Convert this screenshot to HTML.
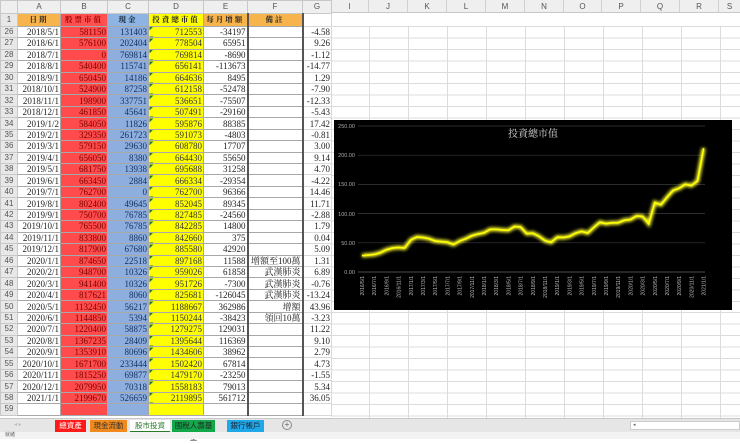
<!DOCTYPE html>
<html><head><meta charset="utf-8"><style>
*{margin:0;padding:0;box-sizing:border-box}
body{width:740px;height:439px;overflow:hidden;background:#fff;position:relative;font-family:"Liberation Serif","Noto Serif CJK SC",serif}
table{position:absolute;left:0;top:0;border-collapse:collapse;table-layout:fixed;width:331px}
td,th{font-size:9px;line-height:10px;padding:0 1px;white-space:nowrap;overflow:hidden;border:1px solid #a8a8a8;text-align:right;color:#222;font-weight:normal}
th{background:#e8e8e8;color:#555;text-align:center;font-family:"Liberation Sans",sans-serif;border-color:#c8c8c8;font-size:8px}
tr.ch th{height:13px;background:#efefef}
tr.h1 td{height:12.8px;text-align:center;font-weight:bold;font-size:7.5px;letter-spacing:2px;font-family:"Liberation Serif","Noto Serif CJK TC",serif}
tr{height:11.45px}
td:nth-child(3){background:#ff4b4b;color:#7a0000}
td:nth-child(4){background:#8eaee0;color:#10305a}
td:nth-child(5){background:linear-gradient(135deg,#1f7a2a 2.5px,transparent 3px),#ffff00;color:#333}
td:nth-child(6){border-right:2px solid #555}
td:nth-child(7){border-right:2px solid #555;font-family:"Liberation Serif","Noto Serif CJK TC",serif}
td:nth-child(8){border-left:none;border-color:#d8d8d8 #d8d8d8 #d8d8d8 #555}
tr.h1 td:nth-child(2),tr.h1 td:nth-child(6),tr.h1 td:nth-child(7){background:#f8b44c;color:#222}
tr.h1 td:nth-child(3){background:#ff5050;color:#900}
tr.h1 td:nth-child(4){background:#8db4e2;color:#123}
tr.h1 td:nth-child(5){background:#ffff00;color:#222}
tr.h1 td:nth-child(8){background:#fff}
#grid2{position:absolute;left:331px;top:26px;width:409px;height:392px;background:#fff;
background-image:repeating-linear-gradient(90deg,transparent 0 38px,#dcdcdc 38px 39px),repeating-linear-gradient(180deg,#dcdcdc 0 1px,transparent 1px 11.45px)}
#colh{position:absolute;left:331px;top:0;width:409px;height:13px;background:#efefef;border-bottom:1px solid #c8c8c8;display:flex;font-family:"Liberation Sans",sans-serif;font-size:8px;color:#555}
#colh span{width:39px;text-align:center;line-height:13px;border-right:1px solid #d0d0d0}
#tabs{position:absolute;left:0;top:418px;width:740px;height:14px;background:#e6e6e6;border-top:1px solid #c8c8c8}
.tab{position:absolute;top:1px;height:12px;font-size:7.5px;line-height:12px;text-align:center;color:#fff;font-family:"Liberation Sans","Noto Sans CJK TC",sans-serif}
#status{position:absolute;left:0;top:432px;width:740px;height:7px;background:#f3f3f3;font-size:5px;line-height:7px;padding-left:5px;color:#666;font-family:"Liberation Sans","Noto Sans CJK TC",sans-serif}
</style></head><body>
<div id="grid2"></div>
<div id="colh"><span style="width:38px">I</span><span>J</span><span>K</span><span>L</span><span>M</span><span>N</span><span style="width:38px">O</span><span>P</span><span>Q</span><span>R</span><span style="width:21px;border:0">S</span></div>
<table>
<colgroup><col style="width:17px"><col style="width:43px"><col style="width:47px"><col style="width:41px"><col style="width:55px"><col style="width:44px"><col style="width:55px"><col style="width:29px"></colgroup>
<tr class="ch"><th></th><th>A</th><th>B</th><th>C</th><th>D</th><th>E</th><th>F</th><th>G</th></tr>
<tr class="h1"><th>1</th><td>日期</td><td>股票市值</td><td>現金</td><td>投資總市值</td><td>每月增額</td><td>備註</td><td></td></tr>
<tr><th>26</th><td>2018/5/1</td><td>581150</td><td>131403</td><td>712553</td><td>-34197</td><td></td><td>-4.58</td></tr>
<tr><th>27</th><td>2018/6/1</td><td>576100</td><td>202404</td><td>778504</td><td>65951</td><td></td><td>9.26</td></tr>
<tr><th>28</th><td>2018/7/1</td><td>0</td><td>769814</td><td>769814</td><td>-8690</td><td></td><td>-1.12</td></tr>
<tr><th>29</th><td>2018/8/1</td><td>540400</td><td>115741</td><td>656141</td><td>-113673</td><td></td><td>-14.77</td></tr>
<tr><th>30</th><td>2018/9/1</td><td>650450</td><td>14186</td><td>664636</td><td>8495</td><td></td><td>1.29</td></tr>
<tr><th>31</th><td>2018/10/1</td><td>524900</td><td>87258</td><td>612158</td><td>-52478</td><td></td><td>-7.90</td></tr>
<tr><th>32</th><td>2018/11/1</td><td>198900</td><td>337751</td><td>536651</td><td>-75507</td><td></td><td>-12.33</td></tr>
<tr><th>33</th><td>2018/12/1</td><td>461850</td><td>45641</td><td>507491</td><td>-29160</td><td></td><td>-5.43</td></tr>
<tr><th>34</th><td>2019/1/2</td><td>584050</td><td>11826</td><td>595876</td><td>88385</td><td></td><td>17.42</td></tr>
<tr><th>35</th><td>2019/2/1</td><td>329350</td><td>261723</td><td>591073</td><td>-4803</td><td></td><td>-0.81</td></tr>
<tr><th>36</th><td>2019/3/1</td><td>579150</td><td>29630</td><td>608780</td><td>17707</td><td></td><td>3.00</td></tr>
<tr><th>37</th><td>2019/4/1</td><td>656050</td><td>8380</td><td>664430</td><td>55650</td><td></td><td>9.14</td></tr>
<tr><th>38</th><td>2019/5/1</td><td>681750</td><td>13938</td><td>695688</td><td>31258</td><td></td><td>4.70</td></tr>
<tr><th>39</th><td>2019/6/1</td><td>663450</td><td>2884</td><td>666334</td><td>-29354</td><td></td><td>-4.22</td></tr>
<tr><th>40</th><td>2019/7/1</td><td>762700</td><td>0</td><td>762700</td><td>96366</td><td></td><td>14.46</td></tr>
<tr><th>41</th><td>2019/8/1</td><td>802400</td><td>49645</td><td>852045</td><td>89345</td><td></td><td>11.71</td></tr>
<tr><th>42</th><td>2019/9/1</td><td>750700</td><td>76785</td><td>827485</td><td>-24560</td><td></td><td>-2.88</td></tr>
<tr><th>43</th><td>2019/10/1</td><td>765500</td><td>76785</td><td>842285</td><td>14800</td><td></td><td>1.79</td></tr>
<tr><th>44</th><td>2019/11/1</td><td>833800</td><td>8860</td><td>842660</td><td>375</td><td></td><td>0.04</td></tr>
<tr><th>45</th><td>2019/12/1</td><td>817900</td><td>67680</td><td>885580</td><td>42920</td><td></td><td>5.09</td></tr>
<tr><th>46</th><td>2020/1/1</td><td>874650</td><td>22518</td><td>897168</td><td>11588</td><td>增額至100萬</td><td>1.31</td></tr>
<tr><th>47</th><td>2020/2/1</td><td>948700</td><td>10326</td><td>959026</td><td>61858</td><td>武漢肺炎</td><td>6.89</td></tr>
<tr><th>48</th><td>2020/3/1</td><td>941400</td><td>10326</td><td>951726</td><td>-7300</td><td>武漢肺炎</td><td>-0.76</td></tr>
<tr><th>49</th><td>2020/4/1</td><td>817621</td><td>8060</td><td>825681</td><td>-126045</td><td>武漢肺炎</td><td>-13.24</td></tr>
<tr><th>50</th><td>2020/5/1</td><td>1132450</td><td>56217</td><td>1188667</td><td>362986</td><td>增額</td><td>43.96</td></tr>
<tr><th>51</th><td>2020/6/1</td><td>1144850</td><td>5394</td><td>1150244</td><td>-38423</td><td>領回10萬</td><td>-3.23</td></tr>
<tr><th>52</th><td>2020/7/1</td><td>1220400</td><td>58875</td><td>1279275</td><td>129031</td><td></td><td>11.22</td></tr>
<tr><th>53</th><td>2020/8/1</td><td>1367235</td><td>28409</td><td>1395644</td><td>116369</td><td></td><td>9.10</td></tr>
<tr><th>54</th><td>2020/9/1</td><td>1353910</td><td>80696</td><td>1434606</td><td>38962</td><td></td><td>2.79</td></tr>
<tr><th>55</th><td>2020/10/1</td><td>1671700</td><td>233444</td><td>1502420</td><td>67814</td><td></td><td>4.73</td></tr>
<tr><th>56</th><td>2020/11/1</td><td>1815250</td><td>69877</td><td>1479170</td><td>-23250</td><td></td><td>-1.55</td></tr>
<tr><th>57</th><td>2020/12/1</td><td>2079950</td><td>70318</td><td>1558183</td><td>79013</td><td></td><td>5.34</td></tr>
<tr><th>58</th><td>2021/1/1</td><td>2199670</td><td>526659</td><td>2119895</td><td>561712</td><td></td><td>36.05</td></tr>
<tr><th>59</th><td></td><td></td><td></td><td style="background:#ffff00"></td><td></td><td></td><td></td></tr>
</table>
<svg style="position:absolute;left:0;top:0" width="740" height="439" font-family="Liberation Sans, sans-serif">
<defs><filter id="gl" x="-5%" y="-5%" width="110%" height="110%"><feGaussianBlur stdDeviation="1.5"/></filter></defs>
<rect x="334" y="120" width="398" height="190" fill="#000"/>
<g stroke="#3a3a3a" stroke-width="0.7">
<line x1="358" x2="705" y1="126" y2="126"/><line x1="358" x2="705" y1="155.2" y2="155.2"/><line x1="358" x2="705" y1="184.4" y2="184.4"/><line x1="358" x2="705" y1="213.6" y2="213.6"/><line x1="358" x2="705" y1="242.8" y2="242.8"/><line x1="358" x2="705" y1="272" y2="272" stroke="#666"/>
</g>
<g fill="#aaa" font-size="5.5" text-anchor="end">
<text x="355" y="128">250.00</text><text x="355" y="157">200.00</text><text x="355" y="186">150.00</text><text x="355" y="216">100.00</text><text x="355" y="245">50.00</text><text x="355" y="274">0.00</text>
</g>
<text x="533" y="137" fill="#ddd" font-size="10" text-anchor="middle" font-family="Liberation Serif, Noto Serif CJK TC, serif">投資總市值</text>
<g filter="url(#gl)"><g transform="translate(362,272) scale(6.1,-0.584)">
<polyline fill="none" stroke="#ffff33" stroke-width="4" vector-effect="non-scaling-stroke" points="0,28 1,29 2,30 3,33 4,38 5,41 6,42 7,41 8,55 9,60 10,59 11,57 12,53 13,52 14,51 15,47 16,53 17,57 18,62 19,65 20,67 21,73 22,73 23,72 24,71.3 25,77.9 26,77 27,65.6 28,66.5 29,61.2 30,53.7 31,50.7 32,59.6 33,59.1 34,60.9 35,66.4 36,69.6 37,66.6 38,76.3 39,85.2 40,82.7 41,84.2 42,84.3 43,88.6 44,89.7 45,95.9 46,95.2 47,82.6 48,118.9 49,115 50,127.9 51,139.6 52,143.5 53,150.2 54,147.9 55,155.8 56,212"/>
</g></g>
<g transform="translate(362,272) scale(6.1,-0.584)">
<polyline fill="none" stroke="#ffff00" stroke-width="1.6" vector-effect="non-scaling-stroke" points="0,28 1,29 2,30 3,33 4,38 5,41 6,42 7,41 8,55 9,60 10,59 11,57 12,53 13,52 14,51 15,47 16,53 17,57 18,62 19,65 20,67 21,73 22,73 23,72 24,71.3 25,77.9 26,77 27,65.6 28,66.5 29,61.2 30,53.7 31,50.7 32,59.6 33,59.1 34,60.9 35,66.4 36,69.6 37,66.6 38,76.3 39,85.2 40,82.7 41,84.2 42,84.3 43,88.6 44,89.7 45,95.9 46,95.2 47,82.6 48,118.9 49,115 50,127.9 51,139.6 52,143.5 53,150.2 54,147.9 55,155.8 56,212"/>
</g>
<g fill="#bbb" font-size="5" text-anchor="end">
<text transform="translate(364,276) rotate(-90)">2016/5/1</text>
<text transform="translate(376.2,276) rotate(-90)">2016/7/1</text>
<text transform="translate(388.4,276) rotate(-90)">2016/9/1</text>
<text transform="translate(400.6,276) rotate(-90)">2016/11/1</text>
<text transform="translate(412.8,276) rotate(-90)">2017/1/1</text>
<text transform="translate(425,276) rotate(-90)">2017/3/1</text>
<text transform="translate(437.2,276) rotate(-90)">2017/5/1</text>
<text transform="translate(449.4,276) rotate(-90)">2017/7/1</text>
<text transform="translate(461.6,276) rotate(-90)">2017/9/1</text>
<text transform="translate(473.8,276) rotate(-90)">2017/11/1</text>
<text transform="translate(486,276) rotate(-90)">2018/1/1</text>
<text transform="translate(498.2,276) rotate(-90)">2018/3/1</text>
<text transform="translate(510.4,276) rotate(-90)">2018/5/1</text>
<text transform="translate(522.6,276) rotate(-90)">2018/7/1</text>
<text transform="translate(534.8,276) rotate(-90)">2018/9/1</text>
<text transform="translate(547,276) rotate(-90)">2018/11/1</text>
<text transform="translate(559.2,276) rotate(-90)">2019/1/1</text>
<text transform="translate(571.4,276) rotate(-90)">2019/3/1</text>
<text transform="translate(583.6,276) rotate(-90)">2019/5/1</text>
<text transform="translate(595.8,276) rotate(-90)">2019/7/1</text>
<text transform="translate(608,276) rotate(-90)">2019/9/1</text>
<text transform="translate(620.2,276) rotate(-90)">2019/11/1</text>
<text transform="translate(632.4,276) rotate(-90)">2020/1/1</text>
<text transform="translate(644.6,276) rotate(-90)">2020/3/1</text>
<text transform="translate(656.8,276) rotate(-90)">2020/5/1</text>
<text transform="translate(669,276) rotate(-90)">2020/7/1</text>
<text transform="translate(681.2,276) rotate(-90)">2020/9/1</text>
<text transform="translate(693.4,276) rotate(-90)">2020/11/1</text>
<text transform="translate(705.6,276) rotate(-90)">2021/1/1</text>
</g>
</svg>
<div id="tabs">
<span style="position:absolute;left:14px;top:2px;font-size:6px;color:#bbb">◂ ▸</span>
<div class="tab" style="left:55px;width:31px;background:#ff1a1a">總資產</div>
<div class="tab" style="left:90px;width:37px;background:#f08a1c;color:#333">現金流動</div>
<div class="tab" style="left:130px;width:40px;background:#fff;color:#2a7a2a;border-bottom:1px solid #2a7a2a">股市投資</div>
<div class="tab" style="left:172px;width:43px;background:#12a84a;color:#222">國稅人壽基金</div>
<div class="tab" style="left:227px;width:37px;background:#1fa8e8;color:#223">銀行帳戶</div>
<span style="position:absolute;left:282px;top:1px;width:10px;height:10px;border:1px solid #888;border-radius:50%;font-size:8px;line-height:8px;text-align:center;color:#666;font-family:'Liberation Sans',sans-serif">+</span>
<span style="position:absolute;left:630px;top:2px;width:110px;height:9px;background:#fff;border:1px solid #ccc;font-size:5px;line-height:7px;color:#666;padding-left:2px">◂</span>
</div>
<div id="status">就緒</div>
</body></html>
